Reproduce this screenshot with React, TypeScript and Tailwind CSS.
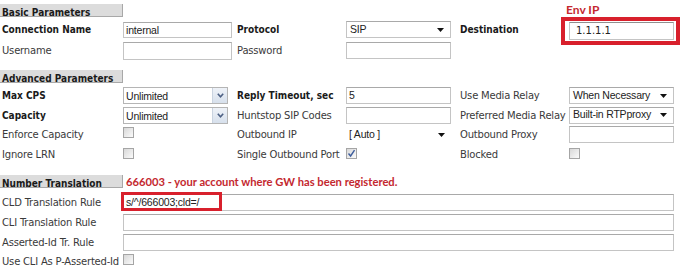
import React from "react";

const label = "font-['DejaVu_Sans',Verdana,sans-serif] text-[10px] tracking-[-0.2px] text-[#3a3a3a] whitespace-nowrap";
const bold = "font-['DejaVu_Sans_Condensed','DejaVu_Sans',Verdana,sans-serif] text-[10px] font-bold text-[#1a1a1a] whitespace-nowrap";
const inputText = "font-['Liberation_Sans',Arial,sans-serif] text-[10.5px] tracking-[-0.2px] text-[#222]";

function Header({ text }: { text: string }) {
  return (
    <div className="w-[123px] h-[13px] shrink-0 bg-[#dcdcdc] border-r border-b border-[#a8a8a8] pl-[2px] leading-[12px]">
      <span className={bold}>{text}</span>
    </div>
  );
}

function TextBox({ value, wide }: { value?: string; wide?: boolean }) {
  return (
    <div
      className={`${wide ? "w-[551px]" : "w-[105px]"} h-[17px] border border-[#c4c4c4] border-t-[#a9a9a9] bg-white pl-[2px] leading-[15px] ${inputText}`}
    >
      {value}
    </div>
  );
}

function Triangle() {
  return (
    <svg width="7" height="4" viewBox="0 0 7 4" className="mr-[6px] shrink-0">
      <path d="M0 0h7L3.5 4z" fill="#111" />
    </svg>
  );
}

function Select({ value, plain }: { value: string; plain?: boolean }) {
  return (
    <div
      className={`w-[105px] h-[17px] flex items-center justify-between bg-white ${plain ? "" : "border border-[#c4c4c4] border-t-[#a9a9a9]"} pl-[3px] ${inputText}`}
    >
      <span className="whitespace-nowrap">{value}</span>
      <Triangle />
    </div>
  );
}

function XpSelect({ value }: { value: string }) {
  return (
    <div className={`w-[105px] h-[17px] flex items-stretch border border-[#b5b5b5] bg-white ${inputText}`}>
      <span className="flex-1 pl-[2px] leading-[16px]">{value}</span>
      <div className="w-[15px] bg-gradient-to-b from-[#eef2f8] to-[#d7e0ec] border-l border-[#c9d3e0] flex items-center justify-center">
        <svg width="7" height="5" viewBox="0 0 7 5">
          <path d="M0.8 0.8 3.5 3.8 6.2 0.8" stroke="#4d6185" strokeWidth="1.6" fill="none" />
        </svg>
      </div>
    </div>
  );
}

function Check({ checked }: { checked?: boolean }) {
  return (
    <div className="w-[11px] h-[11px] border border-[#a5a5a5] bg-gradient-to-br from-[#d8d8d8] to-[#fbfbfb] flex items-center justify-center">
      {checked && (
        <svg width="9" height="9" viewBox="0 0 9 9">
          <path d="M1.5 4.5 3.6 7 7.5 1.2" stroke="#3d5d9c" strokeWidth="1.4" fill="none" />
        </svg>
      )}
    </div>
  );
}

function Row({ h, cells }: { h: string; cells: React.ReactNode[] }) {
  const widths = ["w-[123px] pl-[2px]", "w-[114px]", "w-[109px]", "w-[114px]", "w-[109px]", "flex-1"];
  const single = cells.length === 2;
  return (
    <div className={`flex items-center ${h}`}>
      {cells.map((c, i) => (
        <div key={i} className={`${single && i === 1 ? "flex-1" : widths[i]} shrink-0 flex items-center`}>
          {c}
        </div>
      ))}
    </div>
  );
}

export default function App() {
  return (
    <div className="relative w-[692px] h-[280px] bg-white overflow-hidden">
      {/* basic */}
      <div className="pt-[4px]">
        <Header text="Basic Parameters" />
        <Row
          h="h-[21px] mt-[2px]"
          cells={[
            <span className={bold}>Connection Name</span>,
            <div className={`w-[109px] h-[16px] border border-[#c4c4c4] border-t-[#a9a9a9] pl-[2px] leading-[14px] ${inputText}`}>internal</div>,
            <span className={bold}>Protocol</span>,
            <Select value="SIP" />,
            <span className={bold}>Destination</span>,
            <div className="w-[105px] h-[18px] border border-[#c4c4c4] border-t-[#8f8f8f] pl-[6px] leading-[16px] font-['DejaVu_Sans',Verdana,sans-serif] text-[10px] text-[#222] mt-[3px]">1.1.1.1</div>,
          ]}
        />
        <Row
          h="h-[21px]"
          cells={[
            <span className={label}>Username</span>,
            <div className="w-[109px] h-[18px] border border-[#c4c4c4] border-t-[#a9a9a9]" />,
            <span className={label}>Password</span>,
            <TextBox />,
            <span />,
            <span />,
          ]}
        />
      </div>

      {/* advanced */}
      <div className="mt-[9px]">
        <Header text="Advanced Parameters" />
        <Row
          h="h-[21px] mt-[2px]"
          cells={[
            <span className={bold}>Max CPS</span>,
            <XpSelect value="Unlimited" />,
            <span className={bold}>Reply Timeout, sec</span>,
            <TextBox value="5" />,
            <span className={label}>Use Media Relay</span>,
            <Select value="When Necessary" />,
          ]}
        />
        <Row
          h="h-[18px]"
          cells={[
            <span className={bold}>Capacity</span>,
            <XpSelect value="Unlimited" />,
            <span className={label}>Huntstop SIP Codes</span>,
            <TextBox />,
            <span className={label}>Preferred Media Relay</span>,
            <Select value="Built-in RTPproxy" />,
          ]}
        />
        <Row
          h="h-[21px]"
          cells={[
            <span className={label}>Enforce Capacity</span>,
            <div className="-mt-[5px]"><Check /></div>,
            <span className={label}>Outbound IP</span>,
            <Select value="[ Auto ]" plain />,
            <span className={label}>Outbound Proxy</span>,
            <TextBox />,
          ]}
        />
        <Row
          h="h-[19px]"
          cells={[
            <span className={label}>Ignore LRN</span>,
            <div className="-mt-[3px]"><Check /></div>,
            <span className={label}>Single Outbound Port</span>,
            <div className="-mt-[3px]"><Check checked /></div>,
            <span className={label}>Blocked</span>,
            <div className="-mt-[3px]"><Check /></div>,
          ]}
        />
      </div>

      {/* number translation */}
      <div className="mt-[11px]">
        <div className="flex items-start">
          <Header text="Number Translation" />
          <span className="ml-[3px] leading-[13px] font-['Lato',sans-serif] text-[11.2px] font-bold text-[#c4282f] whitespace-nowrap">
            666003 - your account where GW has been registered.
          </span>
        </div>
        <div className="flex flex-col mt-[4px]">
          <Row h="h-[20px]" cells={[<span className={label}>CLD Translation Rule</span>, <TextBox wide value="s/^/666003;cld=/" />]} />
          <Row h="h-[20px]" cells={[<span className={label}>CLI Translation Rule</span>, <TextBox wide />]} />
          <Row h="h-[20px]" cells={[<span className={label}>Asserted-Id Tr. Rule</span>, <TextBox wide />]} />
          <Row h="h-[18px]" cells={[<span className={label}>Use CLI As P-Asserted-Id</span>, <div className="-mt-[3px]"><Check /></div>]} />
        </div>
      </div>

      {/* annotations */}
      <span className="absolute left-[566px] top-[1px] font-['Lato',sans-serif] text-[12px] font-bold text-[#c4282f]">Env IP</span>
      <div className="absolute left-[561px] top-[17px] w-[119px] h-[28px] border-[4px] border-[#d8202c]" />
      <div className="absolute left-[121px] top-[192px] w-[101px] h-[19px] border-[3px] border-[#d8202c]" />
    </div>
  );
}
